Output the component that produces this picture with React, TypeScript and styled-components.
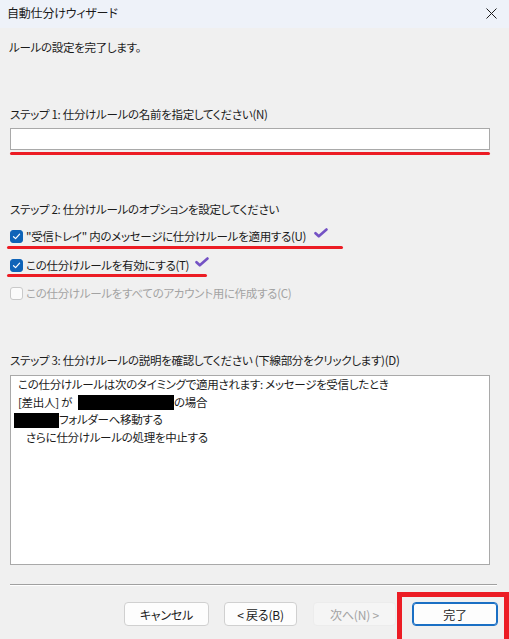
import React from "react";
import styled, { createGlobalStyle } from "styled-components";

const Global = createGlobalStyle`
  html, body { margin: 0; padding: 0; background: #f0f0f0; }
  body {
    font-family: "Noto Sans CJK JP", "Noto Sans", sans-serif;
    font-size: 12px;
    color: #1b1b1b;
    font-feature-settings: "palt";
  }
`;

const Window = styled.div`
  position: relative;
  width: 509px;
  height: 639px;
  overflow: hidden;
  background: #f0f0f0;
  display: flex;
  flex-direction: column;
`;

const TitleBar = styled.div`
  height: 28px;
  background: #eef2f9;
  display: flex;
  align-items: center;
  justify-content: space-between;
  padding: 0 7px 2px 7px;
  box-sizing: border-box;
`;

const Title = styled.span`
  font-size: 12px;
  line-height: 18px;
  letter-spacing: -0.2px;
`;

const CloseIcon = styled.svg`
  width: 11px;
  height: 11px;
  margin-right: 5px;
`;

const Body = styled.div`
  display: flex;
  flex-direction: column;
  padding: 0 10px 0 10px;
  font-size: 11.5px;
  letter-spacing: -0.3px;
`;

const Text = styled.div<{ $top: number; $muted?: boolean }>`
  margin-top: ${(p) => p.$top}px;
  line-height: 18px;
  white-space: nowrap;
  color: ${(p) => (p.$muted ? "#a3a3a3" : "#1b1b1b")};
`;

const TextBox = styled.div`
  margin-top: 5px;
  width: 480px;
  height: 22px;
  box-sizing: border-box;
  background: #fff;
  border: 1px solid #a9a9a9;
`;

const Marker = styled.div<{ $top: number; $left: number; $width: number }>`
  margin-top: ${(p) => p.$top}px;
  margin-left: ${(p) => p.$left}px;
  width: ${(p) => p.$width}px;
  height: 3px;
  border-radius: 2px;
  background: #ec1c24;
`;

const Row = styled.label<{ $top: number; $disabled?: boolean }>`
  margin-top: ${(p) => p.$top}px;
  display: flex;
  align-items: center;
  height: 18px;
  white-space: nowrap;
  color: ${(p) => (p.$disabled ? "#a3a3a3" : "#1b1b1b")};
`;

const Box = styled.span<{ $checked: boolean }>`
  width: 13px;
  height: 13px;
  flex: none;
  box-sizing: border-box;
  border-radius: 3px;
  margin-right: 3px;
  display: inline-flex;
  align-items: center;
  justify-content: center;
  background: ${(p) => (p.$checked ? "#0f64b8" : "#fbfbfb")};
  border: 1px solid ${(p) => (p.$checked ? "#0f64b8" : "#c9c9c9")};
`;

const Tick = styled.svg`
  width: 14px;
  height: 10px;
  margin-top: -6px;
  flex: none;
`;

const Summary = styled.div`
  margin-top: 6px;
  width: 480px;
  height: 190px;
  box-sizing: border-box;
  background: #fff;
  border: 1px solid #a9a9a9;
  padding: 0 0 0 2px;
`;

const SumLine = styled.div<{ $indent: number }>`
  height: 17.7px;
  line-height: 17.7px;
  padding-left: ${(p) => p.$indent}px;
  white-space: nowrap;
  display: flex;
  align-items: center;
`;

const Redact = styled.span<{ $w: number; $gap?: number }>`
  display: inline-block;
  width: ${(p) => p.$w}px;
  height: 15px;
  margin-left: ${(p) => p.$gap ?? 0}px;
  background: #000;
`;

const Separator = styled.div`
  margin-top: 19px;
  width: 487px;
  height: 1px;
  background: #a0a0a0;
  border-bottom: 1px solid #fff;
`;

const Buttons = styled.div`
  display: flex;
  margin-top: 16px;
  padding-left: 114px;
`;

const Button = styled.button<{ $w: number; $gap: number; $primary?: boolean }>`
  width: ${(p) => p.$w}px;
  height: 24px;
  margin-left: ${(p) => p.$gap}px;
  box-sizing: border-box;
  border-radius: 4px;
  font-family: inherit;
  font-size: 12px;
  letter-spacing: -0.2px;
  font-feature-settings: "palt";
  padding: 0;
  color: #1b1b1b;
  background: #fdfdfd;
  border: ${(p) => (p.$primary ? "1px solid #1a6fc4" : "1px solid #d0d0d0")};
  box-shadow: ${(p) => (p.$primary ? "inset 0 0 0 1px #1a6fc4" : "none")};
  &:disabled {
    color: #a3a3a3;
    background: #f5f5f5;
    border-color: #ececec;
  }
`;

const Highlight = styled.div`
  position: absolute;
  left: 397px;
  top: 592px;
  width: 112px;
  height: 52px;
  box-sizing: border-box;
  border: 5px solid #ec1c24;
  pointer-events: none;
`;

const Check = ({ checked }: { checked: boolean }) => (
  <Box $checked={checked}>
    {checked && (
      <svg width="9" height="9" viewBox="0 0 9 9">
        <path d="M1.5 4.7 L3.6 6.6 L7.6 2.2" stroke="#fff" strokeWidth="1.2" fill="none" strokeLinecap="round" strokeLinejoin="round" />
      </svg>
    )}
  </Box>
);

const PurpleTick = ({ left }: { left: number }) => (
  <Tick viewBox="0 0 14 10" style={{ marginLeft: left }}>
    <path d="M1.5 5.2 L4.8 8.3 L12.5 1.5" stroke="#7452c4" strokeWidth="2.6" fill="none" strokeLinecap="round" strokeLinejoin="round" />
  </Tick>
);

export default function App() {
  return (
    <Window>
      <Global />
      <TitleBar>
        <Title>自動仕分けウィザード</Title>
        <CloseIcon viewBox="0 0 11 11">
          <path d="M0.5 0.5 L10.5 10.5 M10.5 0.5 L0.5 10.5" stroke="#1b1b1b" strokeWidth="1" />
        </CloseIcon>
      </TitleBar>
      <Body>
        <Text $top={10} style={{ marginLeft: -1 }}>ルールの設定を完了します。</Text>
        <Text $top={49}>ステップ 1: 仕分けルールの名前を指定してください(N)</Text>
        <TextBox />
        <Marker $top={2} $left={0} $width={480} />
        <Text $top={45}>ステップ 2: 仕分けルールのオプションを設定してください</Text>
        <Row $top={9}>
          <Check checked />
          "受信トレイ" 内のメッセージに仕分けルールを適用する(U)
          <PurpleTick left={8} />
        </Row>
        <Marker $top={1} $left={-3} $width={336} />
        <Row $top={7}>
          <Check checked />
          この仕分けルールを有効にする(T)
          <PurpleTick left={6} />
        </Row>
        <Marker $top={0} $left={-3} $width={200} />
        <Row $top={7} $disabled>
          <Check checked={false} />
          この仕分けルールをすべてのアカウント用に作成する(C)
        </Row>
        <Text $top={49}>ステップ 3: 仕分けルールの説明を確認してください (下線部分をクリックします)(D)</Text>
        <Summary>
          <SumLine $indent={5}>この仕分けルールは次のタイミングで適用されます: メッセージを受信したとき</SumLine>
          <SumLine $indent={5}>
            [差出人] が<Redact $w={96} $gap={6} />の場合
          </SumLine>
          <SumLine $indent={1}>
            <Redact $w={45} />フォルダーへ移動する
          </SumLine>
          <SumLine $indent={13}>さらに仕分けルールの処理を中止する</SumLine>
        </Summary>
        <Separator />
        <Buttons>
          <Button $w={85} $gap={0}>キャンセル</Button>
          <Button $w={73} $gap={15}>&lt; 戻る(B)</Button>
          <Button $w={83} $gap={16} disabled>次へ(N) &gt;</Button>
          <Button $w={86} $gap={16} $primary>完了</Button>
        </Buttons>
      </Body>
      <Highlight />
    </Window>
  );
}
